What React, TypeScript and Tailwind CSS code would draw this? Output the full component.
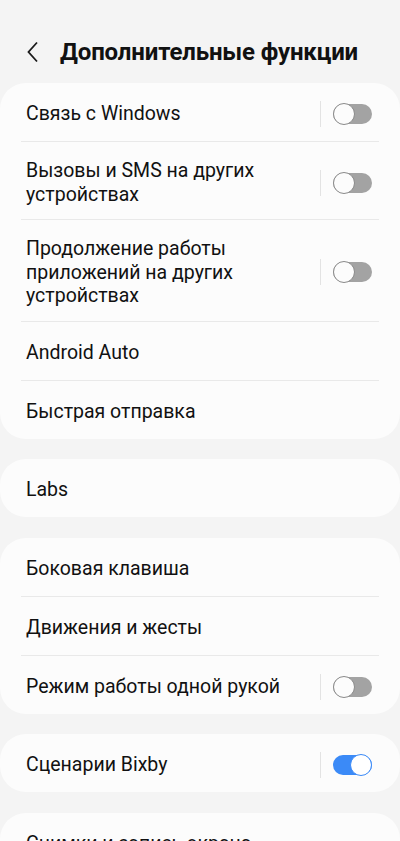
import React from "react";

type Item = {
	label: string;
	toggle?: "on" | "off";
};

const groups: Item[][] = [
	[
		{ label: "Связь с Windows", toggle: "off" },
		{ label: "Вызовы и SMS на других устройствах", toggle: "off" },
		{ label: "Продолжение работы приложений на других устройствах", toggle: "off" },
		{ label: "Android Auto" },
		{ label: "Быстрая отправка" },
	],
	[{ label: "Labs" }],
	[
		{ label: "Боковая клавиша" },
		{ label: "Движения и жесты" },
		{ label: "Режим работы одной рукой", toggle: "off" },
	],
	[{ label: "Сценарии Bixby", toggle: "on" }],
	[{ label: "Снимки и запись экрана" }],
];

function Toggle({ on }: { on: boolean }) {
	return (
		<div className="flex items-center shrink-0">
			<div className="w-px h-[26px] bg-[#e3e3e3]" />
			<div className="ml-[12px] relative w-[39px] h-[22px] flex items-center">
				<div
					className={
						on
							? "w-full h-[20px] rounded-full bg-[#3b8af7]"
							: "w-full h-[20px] rounded-full bg-[#a3a3a3]"
					}
				/>
				<div
					className={
						on
							? "absolute right-0 top-0 w-[22px] h-[22px] rounded-full bg-white border-[1.5px] border-[#3b8af7]"
							: "absolute left-0 top-0 w-[22px] h-[22px] rounded-full bg-[#fcfcfc] border-[1.5px] border-[#8a8a8a]"
					}
				/>
			</div>
		</div>
	);
}

function Row({ label, toggle, last }: Item & { last: boolean }) {
	return (
		<>
			<div className="flex items-center min-h-[58px] pl-[26px] pr-[28px] pt-[17px] pb-[13px]">
				<p className="flex-1 pr-[14px] text-[19.5px] leading-[23.5px] text-[#111]">{label}</p>
				{toggle && <Toggle on={toggle === "on"} />}
			</div>
			{!last && <div className="mx-[21px] h-px bg-[#e9e9e9]" />}
		</>
	);
}

export default function App() {
	return (
		<div
			className="w-[400px] h-[841px] overflow-hidden bg-[#f4f4f4]"
			style={{ fontFamily: "Roboto, 'Noto Sans', sans-serif" }}
		>
			<header className="flex items-center h-[83px] pt-[20px]">
				<svg width="14" height="22" viewBox="0 0 14 22" className="ml-[26px]">
					<path d="M11 1.5 L2.5 11 L11 20.5" fill="none" stroke="#1a1a1a" strokeWidth="1.8" />
				</svg>
				<h1 className="ml-[20px] text-[24px] font-bold text-[#111] tracking-[-0.15px]">
					Дополнительные функции
				</h1>
			</header>
			<div className="flex flex-col gap-[20.5px]">
				{groups.map((g, gi) => (
					<section key={gi} className="bg-[#fcfcfc] rounded-[26px]">
						{g.map((item, i) => (
							<Row key={item.label} {...item} last={i === g.length - 1} />
						))}
					</section>
				))}
			</div>
		</div>
	);
}
